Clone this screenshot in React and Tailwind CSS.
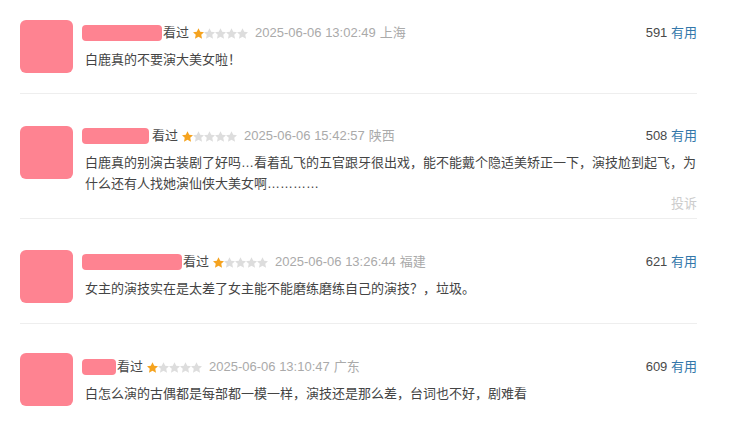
// Douban-style short comment list

const FONT = {
  fontFamily: '"Liberation Sans", Arial, "Noto Sans CJK SC", sans-serif',
};

const comments = [
  {
    nameWidth: 80,
    nameGap: 1,
    time: "2025-06-06 13:02:49",
    place: "上海",
    votes: 591,
    text: "白鹿真的不要演大美女啦！",
    pt: "pt-[20px]",
    head: "pt-[3px]",
  },
  {
    nameWidth: 67,
    nameGap: 3,
    time: "2025-06-06 15:42:57",
    place: "陕西",
    votes: 508,
    text: "白鹿真的别演古装剧了好吗…看着乱飞的五官跟牙很出戏，能不能戴个隐适美矫正一下，演技尬到起飞，为什么还有人找她演仙侠大美女啊…………",
    report: true,
    pt: "pt-[32px]",
    head: "pt-[0px]",
  },
  {
    nameWidth: 100,
    nameGap: 1,
    time: "2025-06-06 13:26:44",
    place: "福建",
    votes: 621,
    text: "女主的演技实在是太差了女主能不能磨练磨练自己的演技？，垃圾。",
    pt: "pt-[31px]",
    head: "pt-[2px]",
  },
  {
    nameWidth: 34,
    nameGap: 1,
    time: "2025-06-06 13:10:47",
    place: "广东",
    votes: 609,
    text: "白怎么演的古偶都是每部都一模一样，演技还是那么差，台词也不好，剧难看",
    pt: "pt-[29px]",
    head: "pt-[4px]",
  },
];

function Star({ on }) {
  return (
    <svg width="11" height="11" viewBox="0 0 20 19">
      <polygon
        points="10,0 13.1,6.2 20,7 15,11.8 16.4,19 10,15.5 3.6,19 5,11.8 0,7 6.9,6.2"
        fill={on ? "#f5a31f" : "#dddddd"}
      />
    </svg>
  );
}

function Comment({ c, last }) {
  return (
    <div
      className={`flex ${c.pt} ${c.report ? "pb-[4px]" : "pb-[20px]"} ${
        last ? "" : "border-b border-[#eeeeee]"
      }`}
    >
      <div className="w-[53px] h-[53px] rounded-[6px] bg-[#fe8391] shrink-0" />
      <div className={`flex-1 ml-[9px] ${c.head}`}>
        <div className="flex items-center h-[20px] text-[13px]">
          <div
            className="h-[16px] rounded-[4px] bg-[#fe8391]"
            style={{ width: c.nameWidth, marginRight: c.nameGap }}
          />
          <span className="text-[#494949]">看过</span>
          <span className="flex ml-[4px]">
            <Star on />
            <Star />
            <Star />
            <Star />
            <Star />
          </span>
          <span className="ml-[7px] text-[#aaaaaa]">{c.time}</span>
          <span className="ml-[4px] text-[#aaaaaa]">{c.place}</span>
          <span className="ml-auto text-[#494949]">
            {c.votes} <span className="text-[#3377aa]">有用</span>
          </span>
        </div>
        <p className="mt-[6px] pl-[3px] text-[13px] leading-[21px] text-[#444444] mr-[-2px]">
          {c.text}
        </p>
        {c.report && (
          <div className="flex justify-end h-[20px] items-center text-[13px] text-[#cccccc]">
            投诉
          </div>
        )}
      </div>
    </div>
  );
}

export default function App() {
  return (
    <div className="w-[754px] h-[425px] bg-white overflow-hidden" style={FONT}>
      <div className="ml-[20px] w-[677px]">
        {comments.map((c, i) => (
          <Comment key={i} c={c} last={i === comments.length - 1} />
        ))}
      </div>
    </div>
  );
}
